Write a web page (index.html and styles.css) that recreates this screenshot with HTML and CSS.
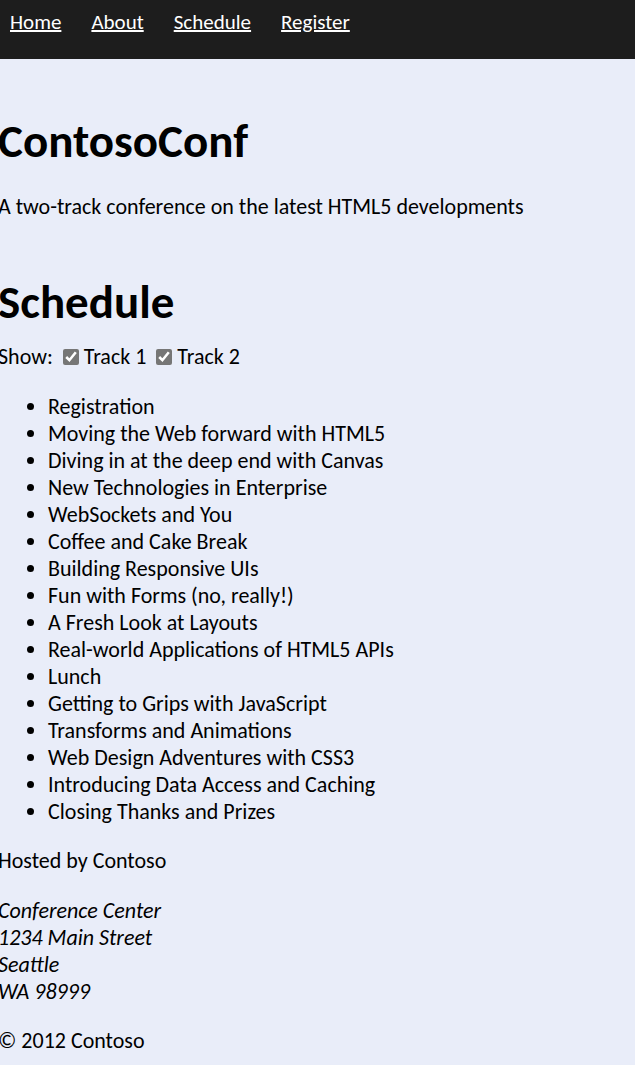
FILE: index.html
```html
<!DOCTYPE html>
<html lang="en">
<head>
<meta charset="utf-8">
<title>ContosoConf Schedule</title>
<link rel="stylesheet" href="styles.css">
</head>
<body>
<nav class="page-nav">
  <a href="#home">Home</a>
  <a href="#about">About</a>
  <a href="#schedule">Schedule</a>
  <a href="#register">Register</a>
</nav>
<div class="page-content">
  <header class="page-header">
    <h1>ContosoConf</h1>
    <p class="tag-line">A two-track conference on the latest HTML5 developments</p>
  </header>
  <main class="schedule">
    <h1>Schedule</h1>
    <div class="filters">
      <span>Show:</span>
      <label class="filter" for="track1"><input type="checkbox" id="track1" checked>Track 1</label>
      <label class="filter" for="track2"><input type="checkbox" id="track2" checked>Track 2</label>
    </div>
    <ul class="sessions">
      <li>Registration</li>
      <li>Moving the Web forward with HTML5</li>
      <li>Diving in at the deep end with Canvas</li>
      <li>New Technologies in Enterprise</li>
      <li>WebSockets and You</li>
      <li>Coffee and Cake Break</li>
      <li>Building Responsive UIs</li>
      <li>Fun with Forms (no, really!)</li>
      <li>A Fresh Look at Layouts</li>
      <li>Real-world Applications of HTML5 APIs</li>
      <li>Lunch</li>
      <li>Getting to Grips with JavaScript</li>
      <li>Transforms and Animations</li>
      <li>Web Design Adventures with CSS3</li>
      <li>Introducing Data Access and Caching</li>
      <li>Closing Thanks and Prizes</li>
    </ul>
  </main>
  <footer class="page-footer">
    <p>Hosted by Contoso</p>
    <address>Conference Center<br>1234 Main Street<br>Seattle<br>WA 98999</address>
    <p>© 2012 Contoso</p>
  </footer>
</div>
</body>
</html>
```
FILE: styles.css
```css
body {
  margin: 0;
  background: #e9edf9;
  color: #000;
  font-family: Calibri, Carlito, Lato, "Open Sans", sans-serif;
  font-size: 22px;
  line-height: 27px;
}

.page-nav {
  display: flex;
  gap: 30px;
  padding: 9px 10px 23px;
  background: #1d1d1d;
  font-size: 21px;
}

.page-nav a {
  color: #fff;
  text-decoration-thickness: 2px;
}

.page-content {
  margin-left: -2px;
}

h1 {
  margin: 0;
  font-size: 47px;
  line-height: 56px;
}

.page-header {
  padding-top: 54px;
}

.tag-line {
  margin: 24px 0 0;
}

.schedule {
  padding-top: 54px;
}

.filters {
  display: flex;
  gap: 10px;
  margin-top: 13px;
}

.filter {
  display: flex;
  align-items: center;
  gap: 5px;
}

.filter input {
  width: 16px;
  height: 16px;
  margin: 0;
  accent-color: #767676;
}

.sessions {
  margin: 23px 0 0;
  padding-left: 50px;
}

.page-footer p,
.page-footer address {
  margin: 22px 0 0;
}

.page-footer address {
  margin-top: 23px;
}
```
